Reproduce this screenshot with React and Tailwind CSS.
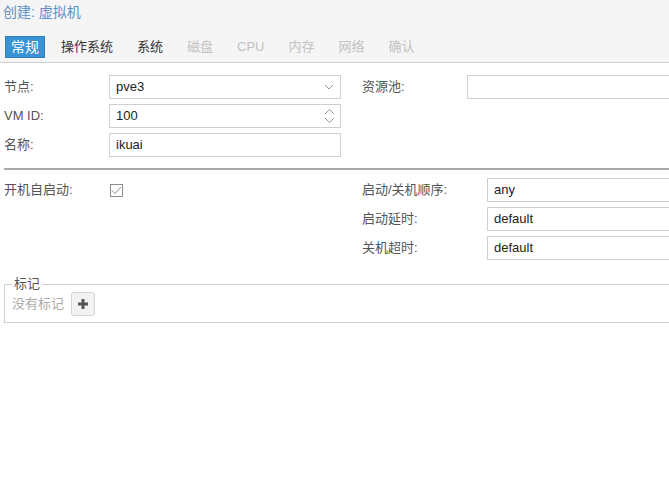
const font = { fontFamily: '"Liberation Sans", Arial, "Noto Sans CJK SC", sans-serif' };

const tabs = [
  { label: "常规", state: "active" },
  { label: "操作系统", state: "on" },
  { label: "系统", state: "on" },
  { label: "磁盘", state: "off" },
  { label: "CPU", state: "off" },
  { label: "内存", state: "off" },
  { label: "网络", state: "off" },
  { label: "确认", state: "off" },
];

function Field({ value, children }) {
  return (
    <div className="relative flex h-[24px] flex-1 items-center border border-[#cfcfcf] bg-white pl-[6px] text-[13px] text-[#222]">
      {value}
      {children}
    </div>
  );
}

function Chevron() {
  return (
    <svg className="absolute right-[6px] top-[7px]" width="10" height="8" viewBox="0 0 10 8">
      <path d="M1 2 L5 6 L9 2" fill="none" stroke="#9a9a9a" strokeWidth="1" />
    </svg>
  );
}

function Spinner() {
  return (
    <svg className="absolute right-[5px] top-[2px]" width="11" height="18" viewBox="0 0 11 18">
      <path d="M1 7 L5.5 2.5 L10 7" fill="none" stroke="#9a9a9a" strokeWidth="1" />
      <path d="M1 11 L5.5 15.5 L10 11" fill="none" stroke="#9a9a9a" strokeWidth="1" />
    </svg>
  );
}

function Row({ label, labelWidth, children }) {
  return (
    <div className="flex h-[24px] items-center">
      <div className="shrink-0 text-[13px] text-[#555]" style={{ width: labelWidth }}>
        {label}
      </div>
      {children}
    </div>
  );
}

export default function App() {
  return (
    <div className="h-[481px] w-[669px] overflow-hidden bg-white" style={font}>
      {/* header */}
      <div className="h-[63px] border-b border-[#d0d0d0] bg-[#f5f5f5]">
        <div className="pl-[3px] pt-[3px] text-[14px] leading-[18px] text-[#5b8fc7]">创建: 虚拟机</div>
        <div className="mt-[15px] flex items-center pl-[5px] text-[13px]">
          {tabs.map((t) =>
            t.state === "active" ? (
              <div
                key={t.label}
                className="mr-[16px] flex h-[22px] items-center border border-[#2f7fc0] bg-[#3892d4] px-[5px] text-[14px] text-white"
              >
                {t.label}
              </div>
            ) : (
              <div
                key={t.label}
                className={
                  "mr-[24px] text-[13px] " + (t.state === "on" ? "text-[#333]" : "text-[#c2c2c2]")
                }
              >
                {t.label}
              </div>
            )
          )}
        </div>
      </div>

      {/* top section */}
      <div className="flex pl-[4px] pt-[12px]">
        <div className="flex w-[337px] flex-col gap-[5px]">
          <Row label="节点:" labelWidth={105}>
            <Field value="pve3">
              <Chevron />
            </Field>
          </Row>
          <Row label="VM ID:" labelWidth={105}>
            <Field value="100">
              <Spinner />
            </Field>
          </Row>
          <Row label="名称:" labelWidth={105}>
            <Field value="ikuai" />
          </Row>
        </div>
        <div className="flex flex-1 flex-col pl-[21px]">
          <Row label="资源池:" labelWidth={105}>
            <div className="-mr-[4px] flex-1">
              <Field value="" />
            </div>
          </Row>
        </div>
      </div>

      {/* divider */}
      <div className="ml-[4px] mt-[11px] h-[2px] bg-[#a8a8a8]" />

      {/* second section */}
      <div className="flex pl-[4px] pt-[8px]">
        <div className="w-[337px]">
          <Row label="开机自启动:" labelWidth={106}>
            <div className="flex h-[13px] w-[13px] items-center justify-center border border-[#8c8c8c] bg-white">
              <svg width="11" height="9" viewBox="0 0 11 9">
                <path d="M1 4.5 L4 7.5 L10 1" fill="none" stroke="#8c8c8c" strokeWidth="1" />
              </svg>
            </div>
          </Row>
        </div>
        <div className="flex flex-1 flex-col gap-[5px] pl-[21px]">
          <Row label="启动/关机顺序:" labelWidth={125}>
            <div className="-mr-[4px] flex-1">
              <Field value="any" />
            </div>
          </Row>
          <Row label="启动延时:" labelWidth={125}>
            <div className="-mr-[4px] flex-1">
              <Field value="default" />
            </div>
          </Row>
          <Row label="关机超时:" labelWidth={125}>
            <div className="-mr-[4px] flex-1">
              <Field value="default" />
            </div>
          </Row>
        </div>
      </div>

      {/* tags fieldset */}
      <fieldset className="ml-[4px] -mr-[4px] mt-[17px] h-[46px] border border-[#cfcfcf] px-[7px] pb-0 pt-0">
        <legend className="px-[2px] text-[13px] leading-[14px] text-[#555]">标记</legend>
        <div className="flex items-center gap-[7px] pt-[1px]">
          <span className="text-[13px] text-[#aaa]">没有标记</span>
          <button className="flex h-[24px] w-[24px] items-center justify-center rounded-[3px] border border-[#d4d4d4] bg-[#f2f2f2]">
            <svg width="12" height="12" viewBox="0 0 12 12">
              <path d="M6 1 V11 M1 6 H11" stroke="#555" strokeWidth="3" />
            </svg>
          </button>
        </div>
      </fieldset>
    </div>
  );
}
